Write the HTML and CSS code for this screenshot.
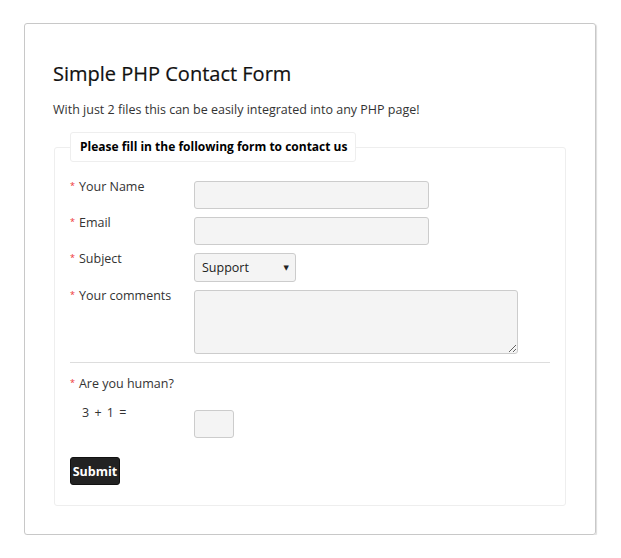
FILE: index.html
```html
<!DOCTYPE html>
<html>
<head>
<meta charset="utf-8">
<link rel="stylesheet" href="styles.css">
</head>
<body>
<div class="card">
  <h1 class="title">Simple PHP Contact Form</h1>
  <p class="intro">With just 2 files this can be easily integrated into any PHP page!</p>
  <fieldset class="box">
    <legend class="legend">Please fill in the following form to contact us</legend>
    <div class="row">
      <label class="label"><span class="req">*</span>Your Name</label>
      <input class="field text" type="text">
    </div>
    <div class="row">
      <label class="label"><span class="req">*</span>Email</label>
      <input class="field text" type="text">
    </div>
    <div class="row">
      <label class="label"><span class="req">*</span>Subject</label>
      <div class="field select"><span>Support</span><span class="arrow">▼</span></div>
    </div>
    <div class="row">
      <label class="label"><span class="req">*</span>Your comments</label>
      <textarea class="field area"></textarea>
    </div>
    <hr class="rule">
    <div class="human"><span class="req">*</span>Are you human?</div>
    <div class="row captcha">
      <span class="sum">3 + 1 =</span>
      <input class="field small" type="text">
    </div>
    <button class="submit" type="button">Submit</button>
  </fieldset>
</div>
</body>
</html>
```
FILE: styles.css
```css
html, body { margin: 0; padding: 0; background: #fff; }
body {
  font-family: "Open Sans", "DejaVu Sans", sans-serif;
  color: #333;
  padding: 23px 25px 0 24px;
}
.card {
  width: 570px;
  border: 1px solid #c8c8c8;
  border-radius: 3px;
  box-shadow: 1px 1px 1px #ddd;
  padding: 0 0 28px 0;
}
.title {
  margin: 38px 0 0 28px;
  font-size: 20px;
  font-weight: normal;
  color: #111;
  line-height: 24px;
  -webkit-text-stroke: 0.2px #111;
}
.intro {
  margin: 16px 0 0 28px;
  font-size: 12.5px;
  line-height: 16px;
  color: #333;
}
.box {
  margin: 14px 0 0 29px;
  width: 512px;
  box-sizing: border-box;
  border: 1px solid #eee;
  border-radius: 3px;
  padding: 19px 15px 20px 15px;
}
.legend {
  border: 1px solid #eee;
  border-radius: 3px;
  padding: 6px 8px 6px 9px;
  font-weight: bold;
  font-size: 12px;
  color: #000;
  line-height: 16px;
  margin-left: 0;
  background: #fff;
}
.row {
  display: flex;
  align-items: flex-start;
  margin-bottom: 8px;
}
.label {
  width: 124px;
  flex: none;
  font-size: 12.5px;
  line-height: 16px;
  color: #333;
  margin-top: -2px;
}
.req {
  color: #e33;
  font-size: 9px;
  margin-right: 4px;
  position: relative;
  top: -2px;
}
.field {
  box-sizing: border-box;
  border: 1px solid #ccc;
  border-radius: 3px;
  background: #f4f4f4;
  margin: 0;
  font-family: inherit;
}
.text { width: 235px; height: 28px; }
.select {
  width: 102px;
  height: 29px;
  display: flex;
  align-items: center;
  justify-content: space-between;
  padding: 0 6px 0 7px;
  font-size: 12.5px;
  color: #222;
}
.arrow { font-size: 7px; color: #222; }
.area { width: 324px; height: 64px; resize: both; display: block; }
.rule {
  border: 0;
  border-top: 1px solid #ddd;
  margin: 1px 0 0 0;
  width: 480px;
}
.human {
  font-size: 12.5px;
  line-height: 16px;
  margin-top: 13px;
}
.captcha { margin-top: 12px; margin-bottom: 0; }
.sum {
  width: 124px;
  flex: none;
  box-sizing: border-box;
  padding-left: 12px;
  font-size: 12.5px;
  line-height: 16px;
  word-spacing: 2px;
}
.small { width: 40px; height: 28px; margin-top: 5px; }
.submit {
  display: block;
  margin-top: 19px;
  background: #222;
  color: #fff;
  border: 1px solid #111;
  border-radius: 3px;
  font-family: inherit;
  font-weight: bold;
  font-size: 12.5px;
  height: 28px;
  width: 50px;
  padding: 0;
}
```
